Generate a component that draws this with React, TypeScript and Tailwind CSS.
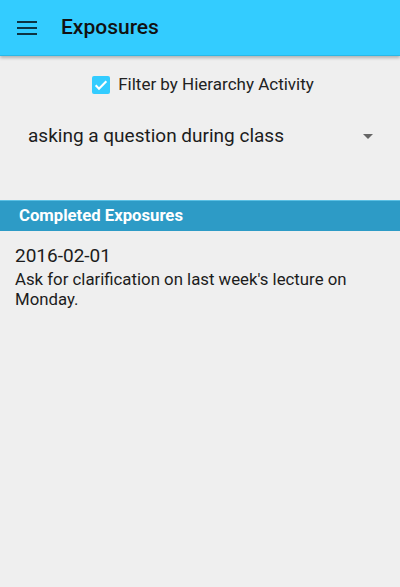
export default function App() {
  return (
    <div
      className="flex h-[587px] w-[400px] flex-col bg-[#efefef] text-[#222]"
      style={{ fontFamily: "Roboto, 'Noto Sans', sans-serif" }}
    >
      <header className="flex h-[56px] shrink-0 items-center border-b border-[#2ab8e6] bg-[#33ccff] shadow-[0_2px_3px_rgba(0,0,0,0.25)]">
        <div className="ml-[17px] flex w-[20px] flex-col gap-[4px]">
          <span className="h-[2px] bg-[#0d3342]" />
          <span className="h-[2px] bg-[#0d3342]" />
          <span className="h-[2px] bg-[#0d3342]" />
        </div>
        <h1 className="ml-[24px] text-[21px] font-medium text-[#111]">Exposures</h1>
      </header>

      <label className="mt-[17px] flex h-[24px] items-center justify-center gap-[8px] pl-[6px] text-[17px] text-[#222]">
        <span className="flex h-[18px] w-[18px] items-center justify-center rounded-[2px] bg-[#33ccff]">
          <svg width="16" height="16" viewBox="0 0 24 24" fill="none" stroke="white" strokeWidth="3.2">
            <path d="M4 12.5l5 5L20 6.5" />
          </svg>
        </span>
        Filter by Hierarchy Activity
      </label>

      <div className="mt-[25px] flex items-center justify-between pl-[28px] pr-[27px]">
        <span className="text-[19px] text-[#1c1c1c]">asking a question during class</span>
        <span className="h-0 w-0 border-x-[5px] border-t-[5px] border-x-transparent border-t-[#666]" />
      </div>

      <div className="mt-[49px] flex h-[31px] items-center border-t border-[#5bc0e4] bg-[#2d9bc6] pl-[19px] text-[16.7px] font-bold text-white">
        Completed Exposures
      </div>

      <div className="px-[15px] pt-[12px]">
        <div className="text-[19px] leading-[26px] text-[#1c1c1c]">2016-02-01</div>
        <p className="text-[16.8px] leading-[20px] text-[#1c1c1c]">
          Ask for clarification on last week's lecture on Monday.
        </p>
      </div>
    </div>
  );
}
